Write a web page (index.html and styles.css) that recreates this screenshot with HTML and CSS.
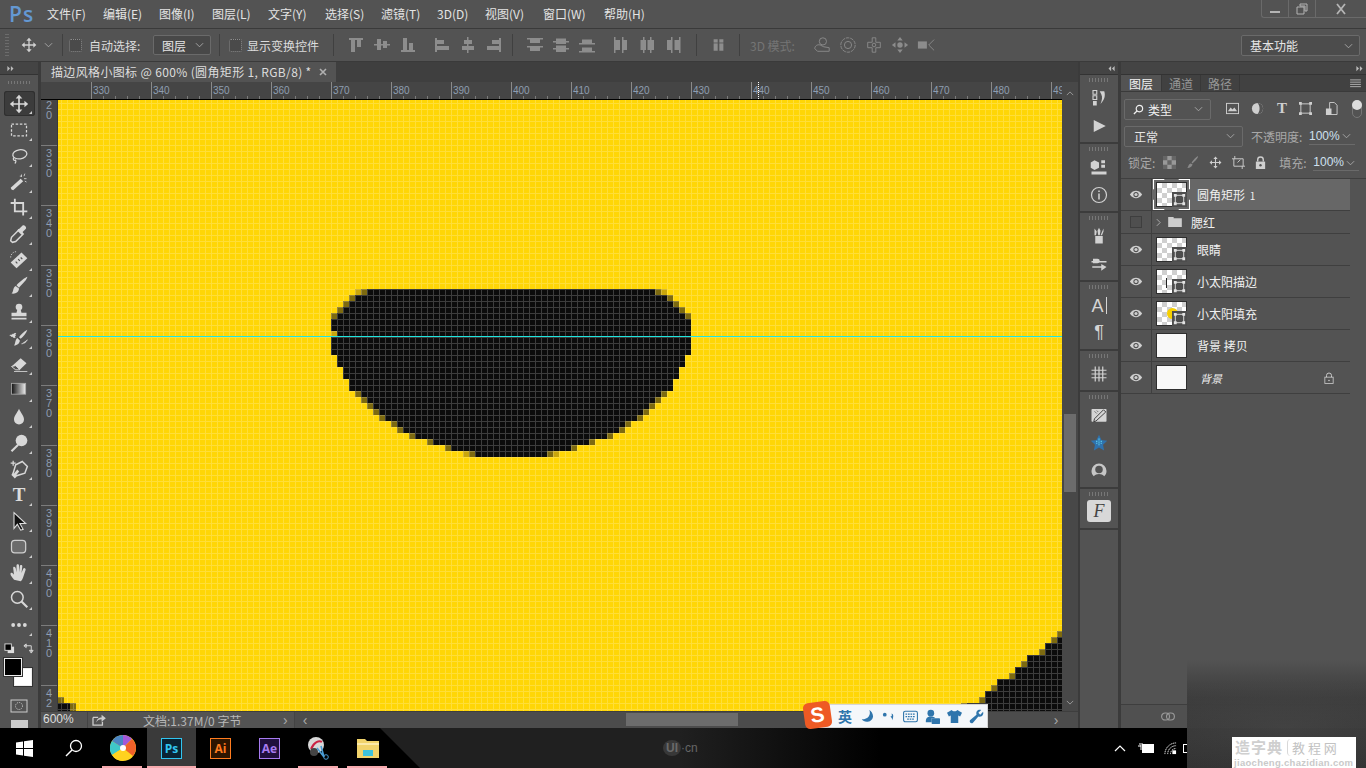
FILE: index.html
```html
<!DOCTYPE html>
<html lang="zh">
<head>
<meta charset="utf-8">
<title>Photoshop</title>
<link rel="stylesheet" href="styles.css">
</head>
<body>
<svg class="sprite" xmlns="http://www.w3.org/2000/svg">
  <symbol id="i-move" viewBox="0 0 24 24"><path d="M12 3v18M3 12h18" fill="none" stroke="currentColor" stroke-width="2"/><path d="M12 1l4 4.5H8zM12 23l4-4.5H8zM1 12l4.5-4v8zM23 12l-4.5-4v8z" fill="currentColor"/></symbol>
  <symbol id="i-chev" viewBox="0 0 10 6"><path d="M1 1l4 4 4-4" fill="none" stroke="currentColor"/></symbol>
  <symbol id="i-eye" viewBox="0 0 16 10"><path d="M1 5c2-3 4.500-4.200 7-4.200S13 2 15 5c-2 3-4.500 4.200-7 4.200S3 8 1 5z" fill="currentColor"/><circle cx="8" cy="5" r="3" fill="#4f4f4f"/><circle cx="8" cy="5" r="1.800" fill="currentColor"/></symbol>
  <symbol id="i-mask" viewBox="0 0 16 16"><path d="M0 0h16v16H0z" fill="#4d4d4d"/><rect x="3.500" y="3.500" width="9" height="9" fill="none" stroke="#e2e2e2"/><path d="M2 2h3v3H2zM11 2h3v3h-3zM2 11h3v3H2zM11 11h3v3h-3z" fill="#e2e2e2"/></symbol>
  <symbol id="a-top" viewBox="0 0 16 16"><path d="M1 1h14v2H1zM3 3h4v12H3zM9 3h4v7H9z" fill="currentColor"/></symbol>
  <symbol id="a-mid" viewBox="0 0 16 16"><path d="M0 7h16v1.500H0zM3 2h4v11H3zM9 4h4v7H9z" fill="currentColor"/></symbol>
  <symbol id="a-bot" viewBox="0 0 16 16"><path d="M1 13h14v2H1zM3 1h4v12H3zM9 6h4v7H9z" fill="currentColor"/></symbol>
  <symbol id="a-left" viewBox="0 0 16 16"><path d="M1 1h2v14H1zM3 3h7v4H3zM3 9h12v4H3z" fill="currentColor"/></symbol>
  <symbol id="a-cen" viewBox="0 0 16 16"><path d="M7 0h1.500v16H7zM4 3h8v4H4zM2 9h12v4H2z" fill="currentColor"/></symbol>
  <symbol id="a-right" viewBox="0 0 16 16"><path d="M13 1h2v14h-2zM6 3h7v4H6zM1 9h12v4H1z" fill="currentColor"/></symbol>
  <symbol id="d-top" viewBox="0 0 16 16"><path d="M0 1h16v1.500H0zM3 2.500h10V6H3zM0 9h16v1.500H0zM3 10.500h10V14H3z" fill="currentColor"/></symbol>
  <symbol id="d-mid" viewBox="0 0 16 16"><path d="M0 4h16v1.500H0zM3 1.500h10V4H3zM3 5.500h10V7H3zM0 11h16v1.500H0zM3 8.500h10V11H3zM3 12.500h10V15H3z" fill="currentColor"/></symbol>
  <symbol id="d-bot" viewBox="0 0 16 16"><path d="M0 6h16v1.500H0zM3 2.500h10V6H3zM0 14h16v1.500H0zM3 10.500h10V14H3z" fill="currentColor"/></symbol>
  <symbol id="h-left" viewBox="0 0 16 16"><path d="M2 0h1.500v16H2zM3.500 3H8v10H3.500zM10 0h1.500v16H10zM11.500 3H15v10h-3.500z" fill="currentColor"/></symbol>
  <symbol id="h-mid" viewBox="0 0 16 16"><path d="M4 0h1.500v16H4zM1.500 3H4v10H1.500zM5.500 3H7v10H5.500zM11 0h1.500v16H11zM8.500 3H11v10H8.500zM12.500 3H15v10h-2.500z" fill="currentColor"/></symbol>
  <symbol id="h-right" viewBox="0 0 16 16"><path d="M5 0h1.500v16H5zM1 3h4v10H1zM13 0h1.500v16H13zM8.500 3H13v10H8.500z" fill="currentColor"/></symbol>
  <symbol id="grip" viewBox="0 0 8 8"><path d="M1 1l3 3-3 3zM5 1l3 3-3 3z" fill="currentColor"/></symbol>
  <symbol id="grip-l" viewBox="0 0 8 8"><path d="M3 1L0 4l3 3zM7 1L4 4l3 3z" fill="currentColor"/></symbol>
</svg>

<div class="app">
  <header class="titlebar">
    <span class="ps-logo">Ps</span>
    <nav class="menu">
      <span class="m-file">文件(F)</span><span class="m-edit">编辑(E)</span><span class="m-img">图像(I)</span><span class="m-layer">图层(L)</span><span class="m-type">文字(Y)</span><span class="m-sel">选择(S)</span><span class="m-fil">滤镜(T)</span><span class="m-3d">3D(D)</span><span class="m-view">视图(V)</span><span class="m-win">窗口(W)</span><span class="m-help">帮助(H)</span>
    </nav>
    <div class="winctl">
      <span class="winbtn"><svg class="w-ic" viewBox="0 0 12 12"><path d="M1 8h10v2H1z" fill="currentColor"/></svg></span>
      <span class="winbtn"><svg class="w-ic" viewBox="0 0 12 12"><path d="M4 1h7v7H9V3H4zM1 4h7v7H1z" fill="none" stroke="currentColor"/></svg></span>
      <span class="winbtn winbtn-x"><svg class="w-ic" viewBox="0 0 12 12"><path d="M2 1l8 10M10 1L2 11" stroke="currentColor" stroke-width="1.800"/></svg></span>
    </div>
  </header>

  <div class="options">
    <span class="gripper-v"></span>
    <svg class="opt-move"><use href="#i-move"/></svg>
    <svg class="chev"><use href="#i-chev"/></svg>
    <span class="vsep vsep-a"></span>
    <span class="check"></span>
    <span class="opt-label">自动选择:</span>
    <span class="select select-layer">图层<svg class="chev"><use href="#i-chev"/></svg></span>
    <span class="vsep vsep-b"></span>
    <span class="check"></span>
    <span class="opt-label opt-label-b">显示变换控件</span>
    <span class="vsep vsep-c"></span>
    <div class="agroup ag1"><svg><use href="#a-top"/></svg><svg><use href="#a-mid"/></svg><svg><use href="#a-bot"/></svg></div>
    <div class="agroup ag2"><svg><use href="#a-left"/></svg><svg><use href="#a-cen"/></svg><svg><use href="#a-right"/></svg></div>
    <span class="vsep vsep-d"></span>
    <div class="agroup ag3"><svg><use href="#d-top"/></svg><svg><use href="#d-mid"/></svg><svg><use href="#d-bot"/></svg></div>
    <div class="agroup ag4"><svg><use href="#h-left"/></svg><svg><use href="#h-mid"/></svg><svg><use href="#h-right"/></svg></div>
    <span class="vsep vsep-e"></span>
    <svg class="a-single" viewBox="0 0 16 16"><path d="M2 1h5v14H2zM9 1h5v14H9z" fill="currentColor"/><path d="M1 5h14v1H1z" fill="#535353"/></svg>
    <span class="vsep vsep-f"></span>
    <span class="opt-3d">3D 模式:</span>
    <div class="mode3d">
      <svg viewBox="0 0 20 20"><circle cx="11" cy="6" r="4" fill="none" stroke="currentColor"/><path d="M2 14c0-3 3-5 6-4l4 2 6 1v4H5z" fill="none" stroke="currentColor"/></svg>
      <svg viewBox="0 0 20 20"><circle cx="10" cy="10" r="8" fill="none" stroke="currentColor" stroke-dasharray="4 1"/><circle cx="10" cy="10" r="4" fill="none" stroke="currentColor"/></svg>
      <svg viewBox="0 0 20 20"><path d="M8 2h4v5h5v6h-5v5H8v-5H3V7h5z" fill="none" stroke="currentColor"/><circle cx="10" cy="10" r="2" fill="none" stroke="currentColor"/></svg>
      <svg viewBox="0 0 20 20"><path d="M10 1l3 4H7zM10 19l3-4H7zM1 10l4-3v6zM19 10l-4-3v6z" fill="currentColor"/><circle cx="10" cy="10" r="3" fill="currentColor"/></svg>
      <svg viewBox="0 0 20 20"><path d="M1 6h10v8H1z" fill="currentColor"/><path d="M19 4l-6 6 6 6" fill="none" stroke="currentColor"/></svg>
    </div>
    <span class="select select-work">基本功能<svg class="chev"><use href="#i-chev"/></svg></span>
  </div>

  <div class="main">
    <aside class="toolbar">
      <div class="dock-head"><svg class="grip-ic"><use href="#grip"/></svg></div>
      <div class="grip-h"></div>
      <div class="tool tool-active"><svg viewBox="0 0 24 24"><use href="#i-move"/></svg></div>
      <div class="tool"><svg viewBox="0 0 24 24"><rect x="3" y="5" width="18" height="14" fill="none" stroke="currentColor" stroke-width="1.500" stroke-dasharray="3 2"/></svg></div>
      <div class="tool"><svg viewBox="0 0 24 24"><ellipse cx="13" cy="10" rx="8.500" ry="5.500" fill="none" stroke="currentColor" stroke-width="1.500" transform="rotate(-8 13 10)"/><path d="M6 14c-2 2 0 4 2 3 1 2-1 4-1 4" fill="none" stroke="currentColor" stroke-width="1.500"/></svg></div>
      <div class="tool"><svg viewBox="0 0 24 24"><path d="M3 21l-1-2L14 8l3 3L5 22z" fill="currentColor"/><path d="M15 3v3M19 2l-1 3M21 8h-3M13 5h2M21 12l-2-1" stroke="currentColor" fill="none"/></svg></div>
      <div class="tool"><svg viewBox="0 0 24 24"><path d="M7 1v15h15M2 6h15v15" fill="none" stroke="currentColor" stroke-width="2.200"/></svg></div>
      <div class="tool"><svg viewBox="0 0 24 24"><path d="M4 22l-2-2 1-4 9-9 5 5-9 9z" fill="none" stroke="currentColor" stroke-width="1.800"/><path d="M12 6l4-4c2-2 6 2 4 4l-4 4 1 2-2 1-5-5 1-2z" fill="currentColor"/></svg></div>
      <div class="tool"><svg viewBox="0 0 24 24"><path d="M2 15L15 3l7 7L9 22z" fill="currentColor"/><path d="M8 14l2 2M11 11l2 2M14 9l2 2" stroke="#535353" stroke-width="1.500"/><path d="M2 9c0-4 3-7 7-7" fill="none" stroke="currentColor" stroke-dasharray="1.500 1.500"/></svg></div>
      <div class="tool"><svg viewBox="0 0 24 24"><path d="M22 1c0 3-6 9-10 13l-3-3C13 7 19 2 22 1zM8 12l4 3c0 4-4 7-9 6 3-2 1-7 5-9z" fill="currentColor"/></svg></div>
      <div class="tool"><svg viewBox="0 0 24 24"><circle cx="12" cy="6" r="4" fill="currentColor"/><path d="M10 9h4l1 4h6v4H3v-4h6zM3 19h18v2H3z" fill="currentColor"/></svg></div>
      <div class="tool"><svg viewBox="0 0 24 24"><path d="M22 2c-1 4-5 8-8 11l-2-2c2-3 6-7 10-9zM10 12l3 3c0 3-3 6-7 6 2-2 1-7 4-9z" fill="currentColor"/><path d="M1 9l7-3-1 6zM15 19c3 0 6-2 7-5" stroke="currentColor" fill="currentColor" stroke-dasharray="1.500 1"/></svg></div>
      <div class="tool"><svg viewBox="0 0 24 24"><path d="M3 15L14 5l7 6-8 8H8z" fill="currentColor"/><path d="M3 15l5 4h5l-5-5z" fill="#535353" stroke="currentColor"/><path d="M6 21h16" stroke="currentColor"/></svg></div>
      <div class="tool"><svg viewBox="0 0 24 24"><defs><linearGradient id="grad-tool"><stop offset="0" stop-color="#111"/><stop offset="1" stop-color="#eee"/></linearGradient></defs><rect x="3" y="4" width="17" height="13" fill="url(#grad-tool)" stroke="#aaa"/></svg></div>
      <div class="tool"><svg viewBox="0 0 24 24"><path d="M12 2c2 5 6 8 6 13a6 6 0 0 1-12 0c0-5 4-8 6-13z" fill="currentColor"/></svg></div>
      <div class="tool"><svg viewBox="0 0 24 24"><circle cx="15" cy="9" r="7" fill="currentColor"/><path d="M11 14l-8 8" stroke="currentColor" stroke-width="2.500"/></svg></div>
      <div class="tool"><svg viewBox="0 0 24 24"><path d="M2 5h6M5 2v6" stroke="currentColor" stroke-width="1.500"/><path d="M16 3l6 6-3 8-10 3-2 2-1-1 5-6-1-1-5 6-1-1 1-2 3-10z" fill="none" stroke="currentColor" stroke-width="1.800"/></svg></div>
      <div class="tool"><span class="tool-t">T</span></div>
      <div class="tool"><svg viewBox="0 0 24 24"><path d="M6 2l14 13h-7l4 7-3 1-4-7-4 5z" fill="#111" stroke="#ddd" stroke-width="1.300"/></svg></div>
      <div class="tool"><svg viewBox="0 0 24 24"><rect x="3" y="4" width="17" height="15" rx="4" fill="#6c6c6c" stroke="#cfcfcf" stroke-width="1.500"/></svg></div>
      <div class="tool"><svg viewBox="0 0 24 24"><path d="M6 20c-2-3-5-5-4-8 2-1 3 1 4 2L5 6c0-2 2-2 3 0l1 5V3c0-2 3-2 3 0v8l1-7c0-2 3-2 3 0l-1 8 2-5c1-2 3-1 3 1l-3 9c-1 3-2 4-3 5z" fill="currentColor"/></svg></div>
      <div class="tool"><svg viewBox="0 0 24 24"><circle cx="10" cy="10" r="7" fill="none" stroke="currentColor" stroke-width="1.800"/><path d="M15 15l7 7" stroke="currentColor" stroke-width="2.600"/></svg></div>
      <div class="tool"><svg viewBox="0 0 24 24"><circle cx="5" cy="12" r="2.300" fill="currentColor"/><circle cx="12" cy="12" r="2.300" fill="currentColor"/><circle cx="19" cy="12" r="2.300" fill="currentColor"/></svg></div>
      <div class="color-switch">
        <svg viewBox="0 0 12 12"><rect x="4" y="4" width="7" height="7" fill="#ddd"/><rect x="1" y="1" width="7" height="7" fill="#000" stroke="#ddd"/></svg>
        <svg viewBox="0 0 12 12"><path d="M1 3h8v7M1 3l2.500-2v4zM9 11L7 8h4z" fill="none" stroke="#ddd"/></svg>
      </div>
      <div class="swatches"><span class="sw-bg"></span><span class="sw-fg"></span></div>
      <div class="quickmask"><svg viewBox="0 0 18 14"><rect x="1" y="1" width="16" height="12" fill="none" stroke="#ccc"/><circle cx="9" cy="7" r="3.500" fill="none" stroke="#ccc" stroke-dasharray="1 1"/></svg></div>
      <div class="screenmode"></div>
    </aside>

    <section class="doc">
      <div class="tabs">
        <div class="tab"><span>描边风格小图标 @ 600% (圆角矩形 1, RGB/8) *</span><svg class="tab-x" viewBox="0 0 8 8"><path d="M1 1l6 6M7 1L1 7" stroke="currentColor" stroke-width="1.600"/></svg></div>
      </div>
      <div class="work">
        <div class="work-left">
          <div class="ruler-top">
            <span class="ruler-corner"></span>
            <div class="hruler">
              <span>330</span><span>340</span><span>350</span><span>360</span><span>370</span><span>380</span><span>390</span><span>400</span><span>410</span><span>420</span><span>430</span><span>440</span><span>450</span><span>460</span><span>470</span><span>480</span><span>490</span>
            </div>
            <i class="ruler-mark"></i>
          </div>
          <div class="work-body">
            <div class="vruler">
              <div class="vr-first">2<br>0</div>
              <div class="vr">3<br>3<br>0</div><div class="vr">3<br>4<br>0</div><div class="vr">3<br>5<br>0</div><div class="vr">3<br>6<br>0</div><div class="vr">3<br>7<br>0</div><div class="vr">3<br>8<br>0</div><div class="vr">3<br>9<br>0</div><div class="vr">4<br>0<br>0</div><div class="vr">4<br>1<br>0</div><div class="vr vr-last">4<br>2</div>
            </div>
            <svg class="canvas" viewBox="58 100 1004 611">
              <defs>
                <pattern id="pxgrid" x="331" y="289" width="6" height="6" patternUnits="userSpaceOnUse"><path d="M0 .5H6M.5 0V6" stroke="#fff" stroke-opacity=".2" fill="none"/></pattern>
              </defs>
              <rect x="58" y="100" width="1004" height="611" fill="#ffd606"/>
              <path fill="#0c0c0c" d="M361 289V295H349V301H343V307H337V313H331V355H337V367H343V379H349V391H355V397H361V403H367V409H373V415H379V421H391V427H397V433H409V439H427V445H445V451H469V457H553V451H577V445H595V439H613V433H625V427H631V421H643V415H649V409H655V403H661V397H667V391H673V379H679V367H685V355H691V313H685V307H679V301H673V295H661V289Z"/>
              <path fill="#7d6a10" d="M361 289h6v6h-6zM349 295h6v6h-6zM343 301h6v6h-6zM337 307h6v6h-6zM331 313h6v6h-6zM655 289h6v6h-6zM667 295h6v6h-6zM673 301h6v6h-6zM679 307h6v6h-6zM685 313h6v6h-6zM355 391h6v6h-6zM361 397h6v6h-6zM367 403h6v6h-6zM373 409h6v6h-6zM379 415h6v6h-6zM391 421h6v6h-6zM397 427h6v6h-6zM409 433h6v6h-6zM427 439h6v6h-6zM445 445h6v6h-6zM469 451h6v6h-6zM661 391h6v6h-6zM655 397h6v6h-6zM649 403h6v6h-6zM643 409h6v6h-6zM637 415h6v6h-6zM625 421h6v6h-6zM619 427h6v6h-6zM607 433h6v6h-6zM589 439h6v6h-6zM571 445h6v6h-6zM547 451h6v6h-6z"/>
              <path fill="#c9a60c" d="M355 289h6v6h-6zM331 331h6v6h-6zM667 289h-6v6h6zM463 451h6v6h-6zM553 451h6v6h-6z"/>
              <path fill="#0c0c0c" d="M1062 631H1057V637H1051V643H1045V649H1039V655H1027V661H1021V667H1015V673H1009V679H997V685H991V691H985V697H979V703H967V711H1062Z"/>
              <path fill="#7d6a10" d="M1057 631h5v6h-5zM1051 637h6v6h-6zM1039 649h6v6h-6zM1021 661h6v6h-6zM1009 673h6v6h-6zM991 685h6v6h-6zM979 697h6v6h-6zM961 703h6v8h-6z"/>
              <path fill="#0c0c0c" d="M58 703h12v8H58z"/>
              <path fill="#7d6a10" d="M58 697h6v6h-6zM70 703h6v8h-6z"/>
              <rect x="58" y="100" width="1004" height="611" fill="url(#pxgrid)"/>
              <rect x="58" y="336" width="1004" height="1" fill="#1fe6e0"/>
            </svg>
          </div>
        </div>
        <div class="vscroll">
          <svg class="sc-up" viewBox="0 0 10 6"><path d="M1 5l4-4 4 4" fill="none" stroke="currentColor"/></svg>
          <span class="sc-thumb"></span>
          <svg class="sc-down" viewBox="0 0 10 6"><use href="#i-chev"/></svg>
        </div>
      </div>
      <footer class="status">
        <span class="zoom-val">600%</span>
        <svg class="share" viewBox="0 0 16 14"><path d="M1 4h6M1 4v9h11V9" fill="none" stroke="currentColor" stroke-width="1.500"/><path d="M5 10c0-4 3-6 6-6V1l5 4-5 4V6c-3 0-5 1-6 4z" fill="currentColor"/></svg>
        <span class="doc-info">文档:1.37M/0 字节</span>
        <span class="st-arrow">›</span>
        <span class="st-scroll">
          <span class="st-arrow st-left">‹</span>
          <span class="st-thumb"></span>
          <span class="st-arrow st-right">›</span>
        </span>
      </footer>
    </section>

    <aside class="dock">
      <div class="dock-head dock-head-r"><svg class="grip-ic"><use href="#grip-l"/></svg></div>
      <div class="dg dg-1"><span class="dg-grip"></span>
        <svg viewBox="0 0 24 24"><path d="M4 2h5v5H4zM4 9h5v5H4z" fill="none" stroke="currentColor" stroke-width="1.500"/><path d="M4 16h5v6H4z" fill="currentColor"/><path d="M13 3h6c2 6 0 12-5 17 2-5 3-9 1-13z" fill="currentColor"/></svg>
        <svg viewBox="0 0 24 24"><path d="M5 4l16 8-16 8z" fill="currentColor"/></svg></div>
      <div class="dg dg-2"><span class="dg-grip"></span>
        <svg viewBox="0 0 24 24"><path d="M6 3l6 3v7l-6 3-5-3V6z" fill="currentColor"/><path d="M15 3h5v4h-5zM15 9h5v4h-5zM2 18h20v4H2z" fill="currentColor"/></svg>
        <svg viewBox="0 0 24 24"><circle cx="12" cy="12" r="10" fill="none" stroke="currentColor" stroke-width="1.600"/><path d="M11 10h2v8h-2zM11 6h2v2h-2z" fill="currentColor"/></svg></div>
      <div class="dg dg-3"><span class="dg-grip"></span>
        <svg viewBox="0 0 24 24"><path d="M7 12h10v10H7zM6 2l3 4-1 5h-2zM12 1l2 4-1 6h-2l-1-6zM18 2l0 4-2 5h-2z" fill="currentColor"/></svg>
        <svg viewBox="0 0 24 24"><path d="M2 8h20v2H2zM4 5h6a3 3 0 0 1 0 6H4zM3 15h18v2H3zM15 12l7 4-7 5z" fill="currentColor"/></svg></div>
      <div class="dg dg-4"><span class="dg-grip"></span>
        <span class="d-txt">A<i class="d-caret"></i></span>
        <span class="d-txt d-pil">¶</span></div>
      <div class="dg dg-5"><span class="dg-grip"></span>
        <svg viewBox="0 0 24 24"><path d="M2 7h20M2 12h20M2 17h20M7 2v20M12 2v20M17 2v20" stroke="currentColor" stroke-width="1.600"/></svg></div>
      <div class="dg dg-6"><span class="dg-grip"></span>
        <svg viewBox="0 0 24 24"><rect x="2" y="4" width="20" height="17" rx="1" fill="#d5d5d5"/><path d="M5 21l3-1 13-12-3-3L6 17z" fill="#d5d5d5" stroke="#333" stroke-width="1.200"/><path d="M6 7l3 3M9 6l2 2" stroke="#555"/></svg>
        <svg viewBox="0 0 24 24"><path d="M12 1l3.300 7 7.700 1-5.600 5.200L18.800 22 12 18l-6.800 4 1.400-7.800L1 9l7.700-1z" fill="#2f72ad"/><path d="M12 6v9M9 9v5M15 9v5" stroke="#5fd5ef" stroke-width="1.600" stroke-dasharray="1.500 1"/></svg>
        <svg viewBox="0 0 24 24"><path d="M12 2a10 10 0 0 0-10 10c0 3 1 5 3 7 2-2 4-3 7-3s5 1 7 3c2-2 3-4 3-7A10 10 0 0 0 12 2z" fill="#c6c6c6"/><circle cx="12" cy="10" r="5" fill="#535353"/></svg></div>
      <div class="dg dg-7"><span class="dg-grip"></span>
        <span class="d-font">F</span></div>
      <div class="dg dg-8"></div>
    </aside>

    <aside class="panels">
      <div class="dock-head dock-head-p"><svg class="grip-ic"><use href="#grip"/></svg></div>
      <div class="p-tabs">
        <span class="p-tab p-tab-on">图层</span><span class="p-tab">通道</span><span class="p-tab">路径</span>
        <svg class="p-menu" viewBox="0 0 12 10"><path d="M0 1h12M0 3.500h12M0 6h12M0 8.500h12" stroke="currentColor"/></svg>
      </div>
      <div class="p-body">
        <div class="p-filter">
          <span class="select select-kind"><svg class="kind-ic" viewBox="0 0 12 12"><circle cx="7" cy="5" r="3.500" fill="none" stroke="currentColor" stroke-width="1.300"/><path d="M4.500 7.500L1 11" stroke="currentColor" stroke-width="1.500"/></svg>类型<svg class="chev"><use href="#i-chev"/></svg></span>
          <div class="kind-icons">
            <svg viewBox="0 0 14 12"><rect x=".5" y=".5" width="13" height="11" fill="none" stroke="currentColor"/><path d="M2 9l3-4 2 2 2-2 3 4z" fill="currentColor"/></svg>
            <svg viewBox="0 0 14 14"><circle cx="7" cy="7" r="6" fill="currentColor"/><path d="M7 1a6 6 0 0 1 0 12c3-3 3-9 0-12z" fill="#535353"/></svg>
            <span class="kind-t">T</span>
            <svg viewBox="0 0 14 14"><rect x="2" y="2" width="10" height="10" fill="none" stroke="currentColor"/><path d="M0 0h3v3H0zM11 0h3v3h-3zM0 11h3v3H0zM11 11h3v3h-3z" fill="currentColor"/></svg>
            <svg viewBox="0 0 14 14"><path d="M5 .5h5l3 3v10H5z" fill="none" stroke="currentColor"/><path d="M1 7h6v7H1z" fill="currentColor"/></svg>
          </div>
          <span class="toggle"><i></i></span>
        </div>
        <div class="p-blend">
          <span class="select select-blend">正常<svg class="chev"><use href="#i-chev"/></svg></span>
          <span class="p-dim p-op">不透明度:</span>
          <span class="p-val">100%</span>
          <svg class="chev"><use href="#i-chev"/></svg>
        </div>
        <div class="p-lock">
          <span class="p-dim">锁定:</span>
          <div class="lock-icons">
            <svg viewBox="0 0 12 12"><path d="M0 0h12v12H0z" fill="#999"/><path d="M0 0h4v4H0zM8 0h4v4H8zM4 4h4v4H4zM0 8h4v4H0zM8 8h4v4H8z" fill="#666"/></svg>
            <svg viewBox="0 0 14 14"><path d="M13 0c0 3-4 6-6 8l-1-1c2-3 5-6 7-7zM5 8l2 1c0 2-2 4-6 4 2-1 1-4 4-5z" fill="#8a8a8a"/></svg>
            <svg viewBox="0 0 24 24"><use href="#i-move"/></svg>
            <svg viewBox="0 0 14 14"><path d="M2 3h10v8H2zM0 3h2M12 11h2M3 0v3M11 11v3M6 7l3-3" fill="none" stroke="currentColor"/></svg>
            <svg viewBox="0 0 12 14"><path d="M3 6V4a3 3 0 0 1 6 0v2" fill="none" stroke="currentColor" stroke-width="1.500"/><path d="M1 6h10v8H1z" fill="currentColor"/><circle cx="6" cy="10" r="1.300" fill="#535353"/></svg>
          </div>
          <span class="p-dim p-fill">填充:</span>
          <span class="p-val">100%</span>
          <svg class="chev"><use href="#i-chev"/></svg>
        </div>
        <div class="layers">
          <div class="layer layer-on">
            <span class="l-eye"><svg><use href="#i-eye"/></svg></span>
            <span class="thumb thumb-check"><svg class="l-mask"><use href="#i-mask"/></svg><svg class="l-bracket" viewBox="0 0 36 30"><path d="M.5 10V.5H11M25 .5H35.500V10M35.500 20V29.500H25M11 29.500H.5V20" fill="none" stroke="#fff"/></svg></span>
            <span class="l-name">圆角矩形 <small>1</small></span>
          </div>
          <div class="layer layer-group">
            <span class="l-eye"><i class="l-empty"></i></span>
            <svg class="l-arrow" viewBox="0 0 6 10"><path d="M1 1l4 4-4 4" fill="none" stroke="currentColor"/></svg>
            <svg class="l-folder" viewBox="0 0 15 11"><path d="M0 0h6v1.500h9V11H0z" fill="currentColor"/></svg>
            <span class="l-name l-name-g">腮红</span>
          </div>
          <div class="layer">
            <span class="l-eye"><svg><use href="#i-eye"/></svg></span>
            <span class="thumb thumb-check"><svg class="l-mask"><use href="#i-mask"/></svg></span>
            <span class="l-name">眼睛</span>
          </div>
          <div class="layer">
            <span class="l-eye"><svg><use href="#i-eye"/></svg></span>
            <span class="thumb thumb-check"><i class="t-stroke"></i><svg class="l-mask"><use href="#i-mask"/></svg></span>
            <span class="l-name">小太阳描边</span>
          </div>
          <div class="layer">
            <span class="l-eye"><svg><use href="#i-eye"/></svg></span>
            <span class="thumb thumb-check"><i class="t-sun"></i><svg class="l-mask"><use href="#i-mask"/></svg></span>
            <span class="l-name">小太阳填充</span>
          </div>
          <div class="layer">
            <span class="l-eye"><svg><use href="#i-eye"/></svg></span>
            <span class="thumb thumb-white"></span>
            <span class="l-name">背景 拷贝</span>
          </div>
          <div class="layer">
            <span class="l-eye"><svg><use href="#i-eye"/></svg></span>
            <span class="thumb thumb-white"></span>
            <span class="l-name l-name-i">背景</span>
            <svg class="l-lock" viewBox="0 0 12 14"><path d="M3 6V4a3 3 0 0 1 6 0v2" fill="none" stroke="currentColor" stroke-width="1.200"/><rect x="1" y="6" width="10" height="7.500" fill="none" stroke="currentColor"/><circle cx="6" cy="10" r="1" fill="currentColor"/></svg>
          </div>
        </div>
        <div class="p-foot"><svg class="link" viewBox="0 0 16 10"><rect x=".7" y="1" width="9" height="8" rx="4" fill="none" stroke="currentColor" stroke-width="1.300"/><rect x="6.300" y="1" width="9" height="8" rx="4" fill="none" stroke="currentColor" stroke-width="1.300"/></svg></div>
      </div>
    </aside>
  </div>

  <footer class="taskbar">
    <span class="tb-glow"></span>
    <div class="tb-item"><svg class="tb-win" viewBox="0 0 17 17"><path d="M0 2.500l7-1V8H0zM8 1.300L17 0v8H8zM0 9h7v6.500l-7-1zM8 9h9v8l-9-1.300z" fill="#fff"/></svg></div>
    <div class="tb-item"><svg class="tb-search" viewBox="0 0 18 18"><circle cx="11" cy="7" r="5.500" fill="none" stroke="#fff" stroke-width="1.300"/><path d="M7 11l-6 6" stroke="#fff" stroke-width="1.500"/></svg></div>
    <div class="tb-item tb-open"><svg class="tb-ball" viewBox="0 0 26 26"><circle cx="13" cy="13" r="13" fill="#ffd21f"/><path d="M13 13V0a13 13 0 0 1 9 4z" fill="#a259d9"/><path d="M13 13l9-9a13 13 0 0 1 4 9 13 13 0 0 1-3 8z" fill="#f0612a"/><path d="M13 13L2 20A13 13 0 0 1 2 6z" fill="#3fc9c9"/><path d="M13 13L2 6a13 13 0 0 1 11-6z" fill="#4a86c4"/><path d="M13 13l-11 7a13 13 0 0 0 11 6z" fill="#ffd21f"/><circle cx="13" cy="13" r="3" fill="#fff"/></svg></div>
    <div class="tb-item tb-open tb-active"><span class="app-tile app-ps">Ps</span></div>
    <div class="tb-item"><span class="app-tile app-ai">Ai</span></div>
    <div class="tb-item"><span class="app-tile app-ae">Ae</span></div>
    <div class="tb-item tb-open"><svg class="tb-sc" viewBox="0 0 24 24"><circle cx="9" cy="9" r="8" fill="#d8d8d8"/><path d="M4 13c3-7 8-9 11-7" stroke="#c24" stroke-width="2" fill="none"/><circle cx="7" cy="16" r="4" fill="#444"/><path d="M10 12l7 9M14 10l3 11" stroke="#4a9dd6" stroke-width="1.600"/><circle cx="19" cy="21" r="2.300" fill="none" stroke="#4a9dd6"/></svg></div>
    <div class="tb-item tb-open"><svg class="tb-fo" viewBox="0 0 22 20"><path d="M0 1h8l2 2h12v17H0z" fill="#f1d36b"/><path d="M0 6h22" stroke="#fbe9a8" stroke-width="2"/><path d="M6 12h10v6H6z" fill="#3ec3dc"/></svg></div>
    <span class="uicn"><b>UI</b>·cn</span>
    <div class="tray">
      <svg class="tray-chev" viewBox="0 0 12 7"><path d="M1 6l5-5 5 5" fill="none" stroke="#fff" stroke-width="1.200"/></svg>
      <svg class="tray-bat" viewBox="0 0 16 12"><path d="M0 4h3M2 1v2M4 1v2M3 3v5" stroke="#fff" fill="none"/><rect x="4.500" y="2.500" width="11" height="8" fill="#fff" stroke="#fff"/></svg>
      <svg class="tray-wifi" viewBox="0 0 14 14"><path d="M1 13A12 12 0 0 1 13 1M4 13a9 9 0 0 1 9-9M7 13a6 6 0 0 1 6-6" fill="none" stroke="#fff" stroke-dasharray="1.500 .7"/><rect x="9" y="9" width="4" height="4" fill="#fff"/></svg>
      <i class="tray-spk"></i>
    </div>
  </footer>

  <div class="fade"></div>
  <div class="watermark"><div class="wm-top"><span class="wm-big">造字典</span><span class="wm-box">教 程 网</span></div><div class="wm-url">jiaocheng.chazidian.com</div></div>
  <div class="ime">
    <span class="ime-s">S</span>
    <span class="ime-en">英</span>
    <svg viewBox="0 0 16 16"><path d="M11 1c2 5-1 10-8 10 2 4 11 4 12-3 0-3-2-6-4-7z" fill="currentColor"/></svg>
    <svg viewBox="0 0 16 16"><circle cx="4" cy="6" r="2" fill="currentColor"/><path d="M11 5c2 0 3 2 1 7 0-2-1-3-2-4 2 0 2-2 1-3z" fill="currentColor"/></svg>
    <svg viewBox="0 0 18 14"><rect x=".7" y=".7" width="16.600" height="12.600" rx="2" fill="none" stroke="currentColor" stroke-width="1.300"/><path d="M3 4h12M3 7h12M5 10h8" stroke="currentColor" stroke-width="1.500" stroke-dasharray="2 1"/></svg>
    <svg viewBox="0 0 18 18"><circle cx="7" cy="5" r="4" fill="currentColor"/><path d="M1 15c0-5 3-6 6-6s5 1 5 2H8v5H1z" fill="currentColor"/><rect x="8" y="11" width="10" height="7" rx="1" fill="currentColor"/></svg>
    <svg viewBox="0 0 16 16"><path d="M5 1L0 4l2 4 2-1v8h8V7l2 1 2-4-5-3c-1 2-5 2-6 0z" fill="currentColor"/></svg>
    <svg viewBox="0 0 16 16"><path d="M15 3l-3 3-2-2 3-3c-3-1-6 1-5 5L1 12c-1 2 1 4 3 3l6-7c4 1 6-2 5-5z" fill="currentColor"/></svg>
  </div>
</div>
</body>
</html>
```
FILE: styles.css
```css
* { box-sizing: border-box; }
html, body { margin: 0; padding: 0; }
body { background: #000; font-family: "Noto Sans CJK SC", "Liberation Sans", sans-serif; font-size: 12px; color: #e6e6e6; overflow: hidden; }
.sprite { display: none; }
svg { display: block; flex: none; }
.app { position: relative; width: 1366px; height: 768px; overflow: hidden; display: flex; flex-direction: column; background: #3b3b3b; }

/* title bar */
.titlebar { height: 29px; background: #535353; border-bottom: 1px solid #3a3a3a; display: flex; align-items: center; position: relative; flex: none; }
.ps-logo { margin-left: 9px; width: 38px; font: 600 21px/26px "Open Sans", sans-serif; color: #6498d2; letter-spacing: 1px; }
.menu { display: flex; line-height: 28px; color: #e4e4e4; }
.menu span { display: block; white-space: nowrap; }
.m-file { width: 56px; } .m-edit { width: 56px; } .m-img { width: 53px; } .m-layer { width: 56px; } .m-type { width: 57px; } .m-sel { width: 56px; } .m-fil { width: 56px; } .m-3d { width: 48px; } .m-view { width: 58px; } .m-win { width: 61px; }
.winctl { position: absolute; top: 0; right: 0; width: 105px; height: 18px; display: flex; border: 1px solid #6a6a6a; border-top: 0; border-right: 0; border-bottom-left-radius: 3px; }
.winbtn { width: 27px; display: flex; align-items: center; justify-content: center; border-right: 1px solid #6a6a6a; color: #b4b4b4; }
.winbtn-x { flex: 1; border-right: 0; }
.w-ic { width: 12px; height: 12px; }

/* options */
.options { height: 33px; background: #535353; border-bottom: 1px solid #3a3a3a; display: flex; align-items: center; flex: none; position: relative; }
.gripper-v { width: 4px; height: 22px; margin-left: 5px; background: repeating-linear-gradient(#6c6c6c 0 1px, transparent 1px 3px); }
.opt-move { width: 16px; height: 16px; margin-left: 12px; color: #d0d0d0; }
.options > .chev { margin-left: 7px; }
.chev { width: 9px; height: 6px; color: #aaa; flex: none; }
.vsep { width: 1px; height: 22px; background: #404040; flex: none; }
.vsep-a { margin: 0 6px 0 9px; }
.check { width: 13px; height: 13px; border: 1px dotted #8c8c8c; border-radius: 2px; background: #4a4a4a; flex: none; }
.opt-label { margin-left: 7px; color: #dcdcdc; white-space: nowrap; width: 57px; }
.opt-label-b { margin-left: 5px; width: auto; }
.select { display: flex; align-items: center; background: #484848; border: 1px solid #6a6a6a; border-radius: 2px; white-space: nowrap; color: #e6e6e6; flex: none; }
.select-layer { width: 58px; height: 20px; margin-left: 7px; padding: 0 6px 0 8px; justify-content: space-between; }
.vsep-b { margin: 0 9px 0 8px; }
.vsep-c { margin-left: 14px; }
.agroup { display: flex; color: #8d8d8d; flex: none; }
.agroup svg { width: 16px; height: 16px; margin-right: 10px; }
.ag1 { margin-left: 14px; }
.ag2 { margin-left: 8px; }
.vsep-d { margin-left: 0; }
.ag3 { margin-left: 14px; }
.ag4 { margin-left: 7px; }
.ag4 svg { margin-right: 11px; }
.vsep-e { margin-left: 3px; }
.a-single { width: 13px; height: 16px; margin-left: 15px; color: #8d8d8d; }
.vsep-f { margin-left: 14px; }
.opt-3d { margin-left: 10px; color: #757575; white-space: nowrap; width: 55px; }
.mode3d { display: flex; color: #8c8c8c; gap: 8px; margin-left: 8px; }
.mode3d svg { width: 18px; height: 18px; }
.select-work { position: absolute; left: 1241px; top: 6px; width: 119px; height: 21px; padding: 0 6px 0 8px; justify-content: space-between; background: #4c4c4c; }

/* main */
.main { flex: 1; display: flex; min-height: 0; position: relative; }
.dock-head { height: 13px; background: #444; border-bottom: 1px solid #333; display: flex; align-items: center; padding-left: 6px; color: #bbb; flex: none; }
.grip-ic { width: 8px; height: 7px; }
.toolbar { width: 38px; margin-right: 3px; background: #535353; display: flex; flex-direction: column; align-items: center; flex: none; overflow: hidden; }
.toolbar .dock-head { width: 100%; }
.grip-h { width: 22px; height: 3px; margin: 6px 0 6px; background: repeating-linear-gradient(90deg, #777 0 1px, transparent 1px 3px); flex: none; }
.tool { position: relative; width: 31px; height: 26.050px; display: flex; align-items: center; justify-content: center; color: #d8d8d8; flex: none; }
.tool svg { width: 20px; height: 20px; }
.tool::after { content: ""; position: absolute; right: 3px; bottom: 2px; border-style: solid; border-width: 0 0 3px 3px; border-color: transparent transparent #ccc transparent; }
.tool-active { height: 25px; background: #3c3c3c; border-radius: 3px; box-shadow: 0 0 0 1px #2f2f2f inset; margin-top: 1px; margin-bottom: 1px; }
.tool-t { font: bold 19px/20px "Liberation Serif", serif; color: #ddd; }
.color-switch { width: 30px; display: flex; justify-content: space-between; margin-top: 5px; flex: none; }
.color-switch svg { width: 11px; height: 11px; }
.swatches { position: relative; width: 30px; height: 30px; margin-top: 4px; flex: none; }
.sw-fg, .sw-bg { position: absolute; width: 18px; height: 18px; border: 1px solid #eee; }
.sw-fg { left: 0; top: 0; background: #000; outline: 1px solid #333; }
.sw-bg { left: 10px; top: 10px; background: #fff; outline: 1px solid #333; }
.quickmask { margin-top: 11px; flex: none; }
.quickmask svg { width: 18px; height: 14px; }
.screenmode { width: 17px; height: 12px; margin-top: 7px; background: #ccc; flex: none; }

/* document */
.doc { width: 1037px; margin-right: 2px; display: flex; flex-direction: column; flex: none; background: #404040; }
.tabs { height: 20px; background: #3f3f3f; flex: none; display: flex; }
.tab { width: 295px; background: #535353; display: flex; align-items: center; padding-left: 10px; color: #ddd; white-space: nowrap; line-height: 20px; letter-spacing: .35px; }
.tab-x { width: 8px; height: 8px; margin-left: 7px; color: #b0b0b0; }
.work { flex: 1; display: flex; min-height: 0; }
.work-left { width: 1021px; display: flex; flex-direction: column; flex: none; }
.ruler-top { height: 18px; display: flex; background: #454545; border-bottom: 1px solid #000; flex: none; position: relative; }
.ruler-corner { width: 17px; flex: none; }
.ruler-mark { position: absolute; left: 717px; top: 0; width: 1px; height: 17px; border-left: 1px dotted #fff; }
.hruler { flex: 1; display: flex; overflow: hidden; padding-left: 33px; color: #8e9db0; font-size: 10px; line-height: 17px; background-image: repeating-linear-gradient(90deg, #8a8a8a 0 1px, transparent 1px 60px), repeating-linear-gradient(90deg, #7a7a7a 0 1px, transparent 1px 12px); background-size: 100% 100%, 100% 3px; background-position: 33px 0, 33px 100%; background-repeat: no-repeat; }
.hruler span { width: 60px; padding-left: 2px; flex: none; font-family: "Liberation Sans", sans-serif; }
.work-body { height: 611px; display: flex; flex: none; }
.vruler { width: 17px; flex: none; overflow: hidden; background: #454545; color: #8e9db0; font: 11px/10px "Liberation Sans", sans-serif; border-right: 1px solid #3a3a3a; }
.vr-first { height: 45px; padding: 0 0 0 5px; }
.vr { height: 60px; border-top: 1px solid #7c7c7c; padding: 2px 0 0 5px; }
.vr-last { height: 26px; }
.canvas { width: 1004px; height: 611px; flex: none; shape-rendering: crispEdges; }
.vscroll { flex: 1; position: relative; background: #484848; color: #aaa; }
.sc-up { position: absolute; top: 9px; left: 4px; width: 8px; height: 5px; }
.sc-thumb { position: absolute; top: 332px; left: 2px; width: 12px; height: 78px; background: #6c6c6c; }
.sc-down { position: absolute; bottom: 6px; left: 4px; width: 8px; height: 5px; }
.status { height: 17px; display: flex; align-items: center; background: #535353; border-top: 1px solid #3e3e3e; flex: none; color: #c8c8c8; }
.zoom-val { width: 47px; padding-left: 2px; height: 100%; line-height: 15px; border-right: 1px solid #444; color: #dedede; font-family: "Liberation Sans", sans-serif; }
.share { width: 14px; height: 12px; margin-left: 4px; color: #ccc; }
.doc-info { margin-left: 37px; width: 140px; white-space: nowrap; line-height: 15px; color: #b8b8b8; }
.st-arrow { color: #aaa; font: 14px/15px "Liberation Sans", sans-serif; }
.st-scroll { margin-left: 6px; flex: 1; height: 100%; display: flex; align-items: center; background: #4c4c4c; border-left: 1px solid #444; position: relative; }
.st-left { margin-left: 8px; }
.st-thumb { position: absolute; left: 331px; top: 1px; width: 112px; height: 13px; background: #6c6c6c; }
.st-right { position: absolute; left: 759px; }

/* dock */
.dock { width: 38px; margin-right: 3px; background: #535353; display: flex; flex-direction: column; flex: none; overflow: hidden; }
.dock-head-r { padding-left: 0; justify-content: flex-end; padding-right: 2px; }
.dg { display: flex; flex-direction: column; align-items: center; border-bottom: 2px solid #3c3c3c; padding-top: 3px; flex: none; color: #d2d2d2; }
.dg svg { width: 18px; height: 18px; margin-bottom: 10px; }
.dg-grip { width: 20px; height: 4px; margin-bottom: 7px; background: repeating-linear-gradient(90deg, #777 0 1px, transparent 1px 3px); flex: none; }
.dg-1 { height: 69px; } .dg-2 { height: 69px; } .dg-3 { height: 69px; } .dg-4 { height: 69px; } .dg-5 { height: 41px; } .dg-6 { height: 97px; } .dg-7 { height: 41px; } .dg-8 { flex: 1; border: 0; }
.dg-7 .dg-grip { margin-bottom: 4px; }
.d-txt { position: relative; font: 18px/20px "Liberation Sans", sans-serif; color: #d5d5d5; height: 20px; margin-bottom: 6px; display: flex; }
.d-caret { display: block; width: 1px; height: 17px; background: #d5d5d5; margin: 1px 0 0 2px; }
.d-pil { font-size: 18px; }
.d-font { width: 24px; height: 22px; background: #d8d8d8; border-radius: 3px; color: #444; font: italic 18px/22px "Liberation Serif", serif; text-align: center; }

/* panels */
.panels { flex: 1; display: flex; flex-direction: column; background: #535353; min-width: 0; }
.dock-head-p { justify-content: flex-end; padding-right: 3px; padding-left: 0; }
.p-tabs { height: 17px; display: flex; background: #414141; position: relative; flex: none; border-bottom: 1px solid #3a3a3a; }
.p-tab { width: 39px; text-align: center; line-height: 17px; color: #969696; border-right: 1px solid #383838; }
.p-tab-on { background: #535353; color: #f2f2f2; width: 41px; }
.p-menu { position: absolute; right: 5px; top: 4px; width: 11px; height: 9px; color: #b8b8b8; }
.p-body { flex: 1; display: flex; flex-direction: column; min-height: 0; background: #535353; }
.p-filter { height: 31px; display: flex; align-items: center; padding-left: 3px; position: relative; flex: none; }
.select-kind { width: 87px; height: 21px; padding: 0 7px 0 8px; margin-top: 3px; background: #535353; color: #f0f0f0; }
.select-kind .chev { margin-left: auto; }
.kind-ic { width: 11px; height: 11px; margin-right: 4px; }
.kind-icons { display: flex; margin-left: 15px; align-items: center; color: #cfcfcf; width: 120px; justify-content: space-between; padding-right: 8px; margin-top: 2px; }
.kind-icons svg { width: 13px; height: 13px; }
.kind-t { font: bold 15px/15px "Liberation Serif", serif; }
.toggle { position: absolute; left: 231px; top: 8px; width: 10px; height: 18px; border: 1px solid #777; border-radius: 5px; }
.toggle i { display: block; width: 10px; height: 10px; margin: -1px 0 0 -1px; background: #ddd; border-radius: 50%; }
.p-blend { height: 26px; display: flex; align-items: center; padding-left: 3px; flex: none; }
.select-blend { width: 119px; height: 21px; padding: 0 7px 0 9px; justify-content: space-between; background: #535353; }
.p-dim { color: #a8a8a8; white-space: nowrap; }
.p-op { margin-left: 8px; width: 58px; }
.p-val { width: 46px; color: #cfe0ee; font-family: "Liberation Sans", sans-serif; border-bottom: 1px solid #6a6a6a; line-height: 16px; font-size: 12px; flex: none; }
.p-blend .chev, .p-lock .chev { margin-left: -13px; }
.p-lock { height: 30px; display: flex; align-items: center; padding: 0 0 2px 7px; border-bottom: 1px solid #3f3f3f; flex: none; }
.lock-icons { display: flex; align-items: center; color: #cfcfcf; margin-left: 8px; width: 104px; justify-content: space-between; }
.lock-icons svg { width: 13px; height: 13px; }
.p-fill { margin-left: 12px; width: 34px; }
.layers { flex: 1; display: flex; flex-direction: column; margin-right: 16px; min-height: 0; }
.layer { height: 32px; display: flex; align-items: center; border-bottom: 1px solid #3f3f3f; position: relative; flex: none; color: #f0f0f0; }
.layer-on { height: 32px; background: #676767; }
.layer-group { height: 23px; }
.l-eye { width: 31px; height: 100%; display: flex; align-items: center; justify-content: center; border-right: 1px solid #3f3f3f; color: #cfcfcf; flex: none; background: #535353; }
.l-eye svg { width: 14px; height: 9px; }
.l-empty { display: block; width: 12px; height: 12px; border: 1px solid #3e3e3e; background: #4f4f4f; }
.thumb { position: relative; width: 31px; height: 25px; margin-left: 4px; border: 1px solid #2e2e2e; flex: none; }
.thumb-check { background: conic-gradient(#cfcfcf 25%, #fff 0 50%, #cfcfcf 0 75%, #fff 0) 0 0 / 10px 10px; }
.thumb-white { background: #f8f8f8; }
.l-mask { position: absolute; right: -1px; bottom: -1px; width: 15px; height: 15px; }
.l-bracket { position: absolute; left: -4px; top: -4px; width: 37px; height: 31px; }
.t-sun { position: absolute; left: 10px; top: 6px; width: 11px; height: 11px; border-radius: 50%; background: #f6cf00; }
.t-stroke { position: absolute; left: 9px; top: 8px; width: 4px; height: 10px; border-left: 1px solid #222; }
.l-name { margin-left: 10px; white-space: nowrap; }
.l-name small { font-size: 10px; margin-left: 2px; }
.l-name-g { margin-left: 9px; }
.l-name-i { font-style: italic; font-size: 11px; margin-left: 13px; }
.l-arrow { width: 5px; height: 9px; margin-left: 4px; color: #bbb; }
.l-folder { width: 14px; height: 10px; margin-left: 7px; color: #cdcdcd; }
.l-lock { position: absolute; left: 203px; top: 10px; width: 10px; height: 12px; color: #c8c8c8; }
.p-foot { height: 24px; background: #505050; border-top: 1px solid #3e3e3e; display: flex; align-items: center; padding-left: 40px; flex: none; color: #9a9a9a; }
.link { width: 14px; height: 9px; }

/* taskbar */
.taskbar { height: 40px; background: #000; display: flex; position: relative; flex: none; }
.tb-glow { position: absolute; left: 380px; top: 0; width: 500px; height: 40px; background: linear-gradient(90deg, #202020 0 60%, #000 100%); clip-path: polygon(0 0, 100% 0, 100% 100%, 40px 100%); }
.tb-item { position: relative; width: 49px; height: 40px; display: flex; align-items: center; justify-content: center; flex: none; }
.tb-open::after { content: ""; position: absolute; left: 4px; right: 5px; bottom: 0; height: 2px; background: #f6a9ad; }
.tb-active { background: #3a3a3a; }
.tb-active::after { left: 0; right: 0; }
.tb-win { width: 17px; height: 17px; }
.tb-search { width: 18px; height: 18px; }
.tb-ball { width: 26px; height: 26px; }
.app-tile { width: 21px; height: 21px; border: 1px solid; font: bold 12px/19px "Open Sans", sans-serif; text-align: center; }
.app-ps { color: #31c5f0; border-color: #31c5f0; background: #0a2433; }
.app-ai { color: #ff7c1f; border-color: #ff7c1f; background: #2e1500; }
.app-ae { color: #a77bf0; border-color: #a77bf0; background: #1f0f3d; }
.tb-sc { width: 24px; height: 24px; }
.tb-fo { width: 22px; height: 20px; }
.uicn { position: absolute; left: 663px; top: 12px; color: #666; font: 12px/16px "Liberation Sans", sans-serif; }
.uicn b { color: #6a6a6a; background: #383838; padding: 1px 3px; border-radius: 50%; }
.tray { position: absolute; left: 1114px; top: 0; height: 40px; display: flex; align-items: center; }
.tray-chev { width: 12px; height: 7px; }
.tray-bat { width: 16px; height: 12px; margin-left: 12px; }
.tray-wifi { width: 13px; height: 13px; margin-left: 10px; }
.tray-spk { display: block; width: 6px; height: 9px; margin-left: 6px; border: 1px solid #fff; }

/* overlays */
.fade { position: absolute; left: 1187px; top: 660px; width: 179px; height: 108px; background: radial-gradient(ellipse 180px 50px at 55% 62%, rgba(92,92,92,.28), transparent), linear-gradient(rgba(47,47,47,0), rgba(58,58,58,.95) 35%, #333 100%); }
.watermark { position: absolute; left: 1232px; top: 737px; width: 124px; height: 31px; background: #fff; color: #c9c9c9; overflow: hidden; }
.wm-top { display: flex; align-items: center; height: 20px; }
.wm-big { font-size: 15px; line-height: 20px; letter-spacing: 1px; margin-left: 3px; font-weight: 700; color: #cfcfcf; }
.wm-box { margin-left: 4px; padding-left: 4px; font-size: 13px; line-height: 17px; border-left: 1px solid #d8d8d8; border-radius: 4px; white-space: nowrap; color: #c2c2c2; }
.wm-url { font: bold 9.500px/11px "Liberation Sans", sans-serif; margin-left: 2px; letter-spacing: .3px; white-space: nowrap; }
.ime { position: absolute; left: 817px; top: 704px; width: 171px; height: 24px; background: #f4f7fa; border: 1px solid #d6d6d6; display: flex; align-items: center; padding-left: 20px; gap: 7px; color: #2f75ac; }
.ime svg { width: 15px; height: 15px; }
.ime-s { position: absolute; left: -14px; top: -3px; width: 27px; height: 26px; border-radius: 5px; background: #ee5a24; color: #fff; font: bold 21px/26px "Liberation Sans", sans-serif; text-align: center; transform: rotate(-8deg); }
.ime-en { font-weight: 700; font-size: 14px; line-height: 20px; }
```
